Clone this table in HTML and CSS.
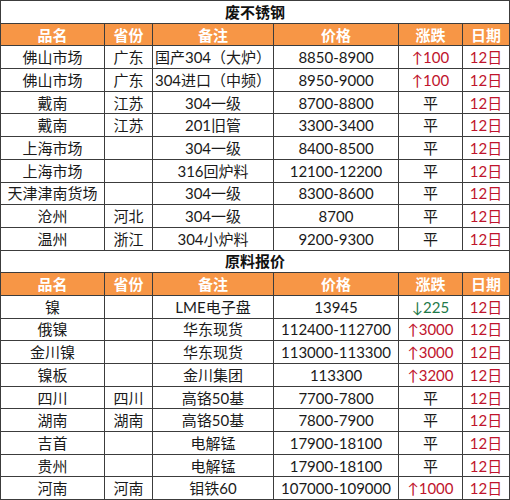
FILE: index.html
```html
<!DOCTYPE html>
<html lang="zh">
<head>
<meta charset="utf-8">
<link rel="stylesheet" href="styles.css">
</head>
<body>
<table class="sheet">
  <colgroup>
    <col class="c-name"><col class="c-prov"><col class="c-note"><col class="c-price"><col class="c-chg"><col class="c-date">
  </colgroup>
  <tbody>
    <tr class="title"><td colspan="6">废不锈钢</td></tr>
    <tr class="head"><td>品名</td><td>省份</td><td>备注</td><td>价格</td><td>涨跌</td><td>日期</td></tr>
    <tr><td>佛山市场</td><td>广东</td><td>国产304（大炉）</td><td>8850-8900</td><td class="up">↑100</td><td class="date">12日</td></tr>
    <tr><td>佛山市场</td><td>广东</td><td>304进口（中频）</td><td>8950-9000</td><td class="up">↑100</td><td class="date">12日</td></tr>
    <tr><td>戴南</td><td>江苏</td><td>304一级</td><td>8700-8800</td><td>平</td><td class="date">12日</td></tr>
    <tr><td>戴南</td><td>江苏</td><td>201旧管</td><td>3300-3400</td><td>平</td><td class="date">12日</td></tr>
    <tr><td>上海市场</td><td></td><td>304一级</td><td>8400-8500</td><td>平</td><td class="date">12日</td></tr>
    <tr><td>上海市场</td><td></td><td>316回炉料</td><td>12100-12200</td><td>平</td><td class="date">12日</td></tr>
    <tr><td>天津津南货场</td><td></td><td>304一级</td><td>8300-8600</td><td>平</td><td class="date">12日</td></tr>
    <tr><td>沧州</td><td>河北</td><td>304一级</td><td>8700</td><td>平</td><td class="date">12日</td></tr>
    <tr><td>温州</td><td>浙江</td><td>304小炉料</td><td>9200-9300</td><td>平</td><td class="date">12日</td></tr>
    <tr class="title"><td colspan="6">原料报价</td></tr>
    <tr class="head"><td>品名</td><td>省份</td><td>备注</td><td>价格</td><td>涨跌</td><td>日期</td></tr>
    <tr><td>镍</td><td></td><td>LME电子盘</td><td>13945</td><td class="down">↓225</td><td class="date">12日</td></tr>
    <tr><td>俄镍</td><td></td><td>华东现货</td><td>112400-112700</td><td class="up">↑3000</td><td class="date">12日</td></tr>
    <tr><td>金川镍</td><td></td><td>华东现货</td><td>113000-113300</td><td class="up">↑3000</td><td class="date">12日</td></tr>
    <tr><td>镍板</td><td></td><td>金川集团</td><td>113300</td><td class="up">↑3200</td><td class="date">12日</td></tr>
    <tr><td>四川</td><td>四川</td><td>高铬50基</td><td>7700-7800</td><td>平</td><td class="date">12日</td></tr>
    <tr><td>湖南</td><td>湖南</td><td>高铬50基</td><td>7800-7900</td><td>平</td><td class="date">12日</td></tr>
    <tr><td>吉首</td><td></td><td>电解锰</td><td>17900-18100</td><td>平</td><td class="date">12日</td></tr>
    <tr><td>贵州</td><td></td><td>电解锰</td><td>17900-18100</td><td>平</td><td class="date">12日</td></tr>
    <tr><td>河南</td><td>河南</td><td>钼铁60</td><td>107000-109000</td><td class="up">↑1000</td><td class="date">12日</td></tr>
  </tbody>
</table>
</body>
</html>
```
FILE: styles.css
```css
html, body {
  margin: 0;
  padding: 0;
  background: #ffffff;
}
.sheet {
  border-collapse: collapse;
  table-layout: fixed;
  width: 509px;
  font-family: Lato, "Noto Sans CJK SC", sans-serif;
  font-size: 15px;
  color: #1a1a1a;
}
.c-name { width: 104px; }
.c-prov { width: 48px; }
.c-note { width: 121px; }
.c-price { width: 125px; }
.c-chg { width: 64px; }
.c-date { width: 47px; }
.sheet td {
  border: 1px solid #3c3c3c;
  height: 21.7px;
  padding: 0;
  text-align: center;
  white-space: nowrap;
  overflow: hidden;
  line-height: 20px;
}
.title td {
  font-weight: bold;
  color: #111;
  background: #ffffff;
}
.head td {
  background: #f79646;
  color: #ffffff;
  font-weight: bold;
}
.up { color: #c0142c; }
.down { color: #1f7a4a; }
.date { color: #c0142c; }
```
